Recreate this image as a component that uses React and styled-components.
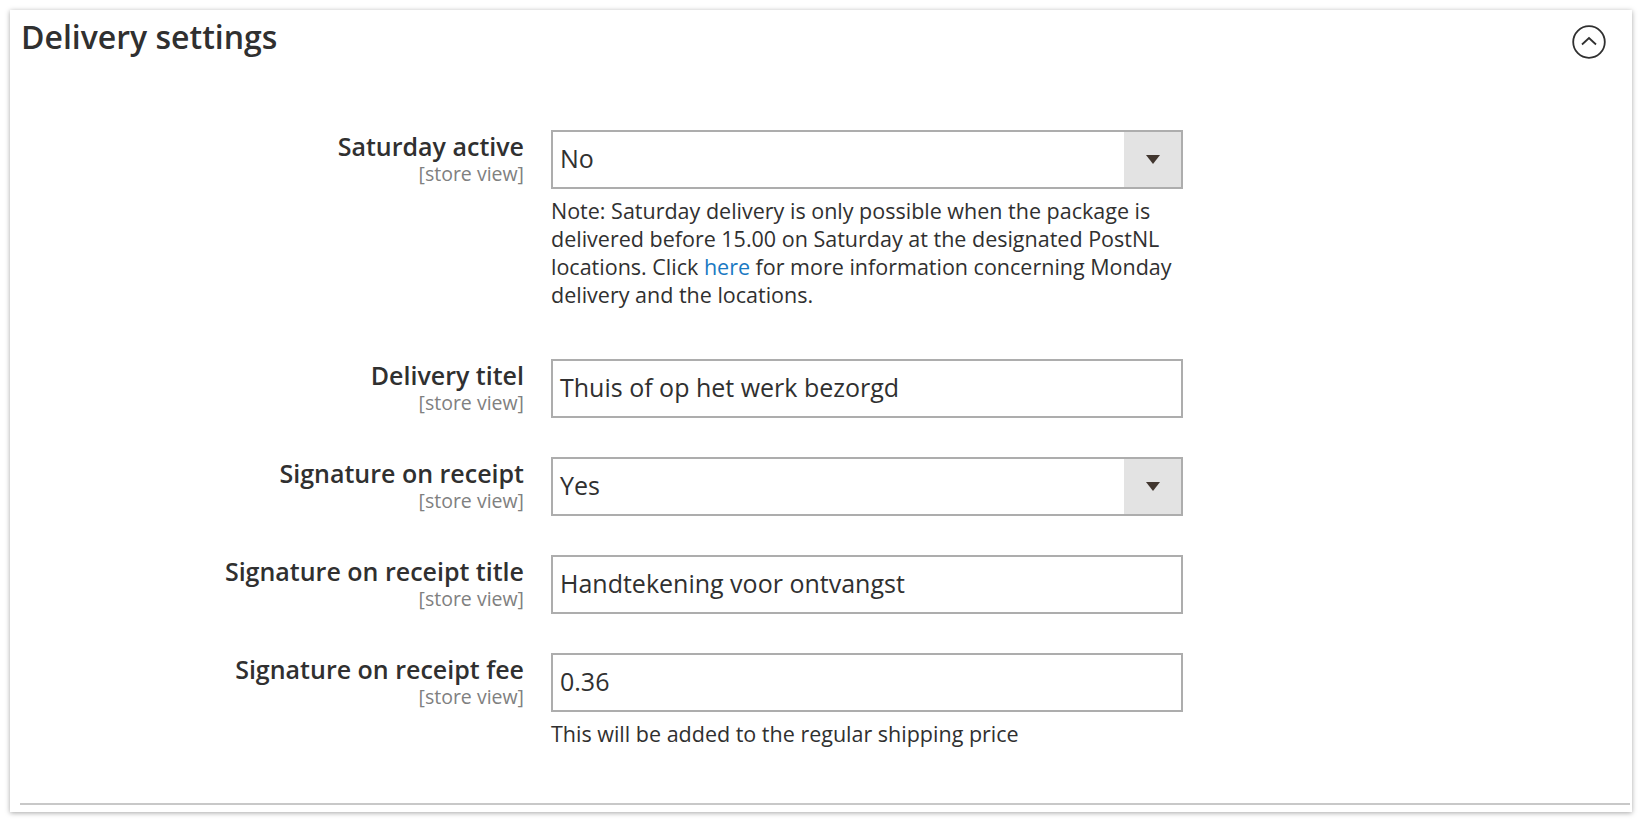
import React from 'react';
import styled, { createGlobalStyle } from 'styled-components';

const Global = createGlobalStyle`
  body {
    margin: 0;
    background: #fff;
    font-family: 'Open Sans', 'Liberation Sans', sans-serif;
    color: #303030;
  }
`;

const Page = styled.div`
  padding: 10px;
`;

const Card = styled.section`
  width: 1622px;
  height: 802px;
  box-sizing: border-box;
  background: #fff;
  box-shadow: 0 1px 5px rgba(0, 0, 0, 0.35);
  padding: 0 10px;
  display: flex;
  flex-direction: column;
`;

const Header = styled.div`
  display: flex;
  justify-content: space-between;
  align-items: flex-start;
  padding: 7px 16px 0 1px;
  height: 120px;
  box-sizing: border-box;
`;

const Title = styled.h2`
  margin: 0;
  font-size: 32px;
  font-weight: 600;
  line-height: 40px;
  color: #303030;
`;

const Toggle = styled.button`
  margin-top: 8px;
  width: 34px;
  height: 34px;
  padding: 0;
  border: 0;
  background: none;
  cursor: pointer;
`;

const Fields = styled.div`
  display: flex;
  flex-direction: column;
  gap: 39px;
  flex: 1;
`;

const Row = styled.div`
  display: grid;
  grid-template-columns: 504px 632px;
  column-gap: 27px;
`;

const LabelCol = styled.div`
  text-align: right;
`;

const Label = styled.div`
  font-size: 25px;
  font-weight: 600;
  line-height: 32px;
  color: #303030;
`;

const Scope = styled.div`
  font-size: 19.5px;
  line-height: 24px;
  color: #808080;
`;

const Control = styled.div`
  display: flex;
  flex-direction: column;
`;

const Box = styled.div`
  height: 59px;
  box-sizing: border-box;
  border: 2px solid #adadad;
  display: flex;
  align-items: center;
  font-size: 25px;
  color: #303030;
  background: #fff;
`;

const Value = styled.span`
  flex: 1;
  padding: 0 0 3px 7px;
`;

const Caret = styled.span`
  width: 57px;
  align-self: stretch;
  background: #e3e3e3;
  display: flex;
  align-items: center;
  justify-content: center;
`;

const Note = styled.div`
  margin-top: 8px;
  margin-bottom: ${(p) => p.$after || 0}px;
  font-size: 21.5px;
  line-height: 28px;
  color: #303030;
  a {
    color: #1979c3;
    text-decoration: none;
  }
`;

const Rule = styled.div`
  height: 2px;
  background: #c8c8c8;
  margin: 0 -8px 7px 0;
`;

const Select = ({ value }) => (
  <Box>
    <Value>{value}</Value>
    <Caret>
      <svg width="14" height="9" viewBox="0 0 14 9">
        <path d="M0 0h14L7 9z" fill="#41362f" />
      </svg>
    </Caret>
  </Box>
);

const Input = ({ value }) => (
  <Box>
    <Value>{value}</Value>
  </Box>
);

const Field = ({ label, children }) => (
  <Row>
    <LabelCol>
      <Label>{label}</Label>
      <Scope>[store view]</Scope>
    </LabelCol>
    <Control>{children}</Control>
  </Row>
);

export default function App() {
  return (
    <>
      <Global />
      <Page>
        <Card>
          <Header>
            <Title>Delivery settings</Title>
            <Toggle aria-label="collapse">
              <svg width="34" height="34" viewBox="0 0 34 34">
                <circle cx="17" cy="17" r="15.8" fill="none" stroke="#303030" strokeWidth="1.8" />
                <path d="M10 19.5L17 13l7 6.5" fill="none" stroke="#303030" strokeWidth="1.8" />
              </svg>
            </Toggle>
          </Header>
          <Fields>
            <Field label="Saturday active">
              <Select value="No" />
              <Note $after={11}>
                Note: Saturday delivery is only possible when the package is delivered before 15.00 on Saturday at the designated PostNL locations. Click <a href="#">here</a> for more information concerning Monday delivery and the locations.
              </Note>
            </Field>
            <Field label="Delivery titel">
              <Input value="Thuis of op het werk bezorgd" />
            </Field>
            <Field label="Signature on receipt">
              <Select value="Yes" />
            </Field>
            <Field label="Signature on receipt title">
              <Input value="Handtekening voor ontvangst" />
            </Field>
            <Field label="Signature on receipt fee">
              <Input value="0.36" />
              <Note>This will be added to the regular shipping price</Note>
            </Field>
          </Fields>
          <Rule />
        </Card>
      </Page>
    </>
  );
}
